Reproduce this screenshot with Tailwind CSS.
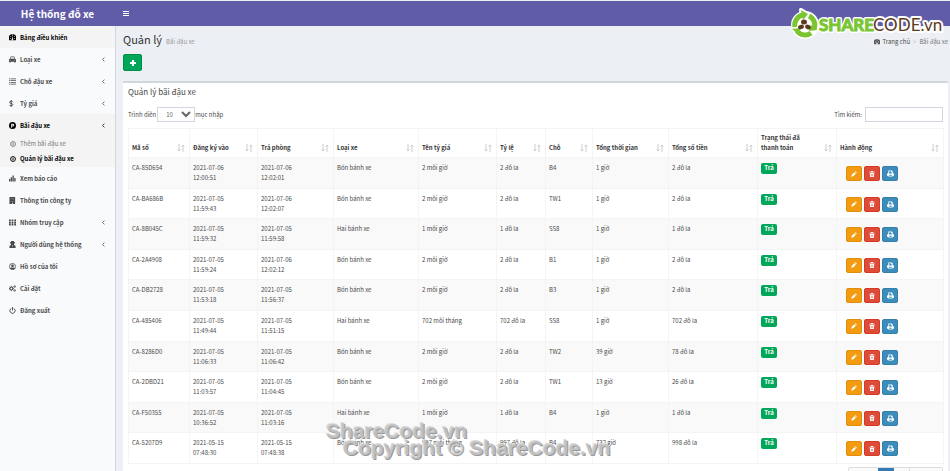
<!DOCTYPE html>
<html lang="vi">
  <head>
    <meta charset="UTF-8" />
    <meta name="viewport" content="width=device-width, initial-scale=1.0" />
    <script src="https://cdn.jsdelivr.net/npm/@tailwindcss/browser@4"></script>
    <title>Quản lý bãi đậu xe</title>
  </head>
  <body
    class="h-screen overflow-hidden flex flex-col bg-[#ecf0f5] pt-px font-['Noto_Sans_CJK_SC','Noto_Sans',sans-serif] text-[6px] leading-[10px] text-[#4a4a4a]"
  >
    <!-- ICONS -->
    <svg class="hidden">
      <symbol id="i-dashboard" viewBox="0 0 16 16"><path fill-rule="evenodd" d="M8 1a8 8 0 0 0-7.500 13h15A8 8 0 0 0 8 1zM7 3h2v2H7zM3 5h2v2H3zm8 0h2v2h-2zM2 9h2v2H2zm10 0h2v2h-2zM7.500 7h1.500l-.5 3a2 2 0 1 1-1.500 0z"/></symbol>
      <symbol id="i-car" viewBox="0 0 16 16"><path fill-rule="evenodd" d="M4 1h8l1.500 5H14l2 2v5h-1v2h-3v-2H4v2H1v-2H0V8l2-2h.5zm1 2-1 3h8l-1-3zM3 8.500a1 1 0 1 0 0 2 1 1 0 0 0 0-2zm10 0a1 1 0 1 0 0 2 1 1 0 0 0 0-2z"/></symbol>
      <symbol id="i-list" viewBox="0 0 16 16"><path d="M0 1h3v2H0zm4 0h12v2H4zM0 5h3v2H0zm4 0h12v2H4zM0 9h3v2H0zm4 0h12v2H4zM0 13h3v2H0zm4 0h12v2H4z"/></symbol>
      <symbol id="i-dollar" viewBox="0 0 16 16"><path d="M9 5C8 2 1 2 1 5.500S9 7 9 10.500 1 14 .5 11M5 0v16" fill="none" stroke="currentColor" stroke-width="2"/></symbol>
      <symbol id="i-park" viewBox="0 0 16 16"><path fill-rule="evenodd" d="M8 0a8 8 0 1 0 0 16A8 8 0 0 0 8 0zM5 4h4a3 3 0 0 1 0 6H7v3H5zm2 2v2h2a1 1 0 0 0 0-2z"/></symbol>
      <symbol id="i-circle" viewBox="0 0 16 16"><circle cx="8" cy="8" r="6.500" fill="none" stroke="currentColor" stroke-width="2.500"/><path d="M8 4v8M5 8h6" stroke="currentColor" stroke-width="1.500"/></symbol>
      <symbol id="i-chart" viewBox="0 0 16 16"><path d="M0 9h3v6H0zm4-4h3v10H4zm4-4h3v14H8zm4 6h3v8h-3z"/></symbol>
      <symbol id="i-building" viewBox="0 0 16 16"><path fill-rule="evenodd" d="M1 0h13v16H9v-3H7v3H1zm3 3v1h1V3zm3 0v1h1V3zm3 0v1h1V3zM4 6v1h1V6zm3 0v1h1V6zm3 0v1h1V6zM4 9v1h1V9zm3 0v1h1V9zm3 0v1h1V9z"/></symbol>
      <symbol id="i-grid" viewBox="0 0 16 16"><path d="M0 1h4v4H0zm6 0h4v4H6zm6 0h4v4h-4zM0 6h4v4H0zm6 0h4v4H6zm6 0h4v4h-4zM0 11h4v4H0zm6 0h4v4H6zm6 0h4v4h-4z"/></symbol>
      <symbol id="i-agent" viewBox="0 0 16 16"><path fill-rule="evenodd" d="M5 0h6l1 3h2v2h-2a4 4 0 0 1-1 4l4 2v5H1v-5l4-2a4 4 0 0 1-1-4H2V3h2zm2 10 1 4 1-4z"/></symbol>
      <symbol id="i-user" viewBox="0 0 16 16"><circle cx="8" cy="8" r="7" fill="none" stroke="currentColor" stroke-width="1.800"/><circle cx="8" cy="6.500" r="3"/><path d="M2 12c2-2 4-2 6-1 2-1 4-1 6 1-3 4-9 4-12 0z"/></symbol>
      <symbol id="i-gears" viewBox="0 0 16 16"><circle cx="5.500" cy="8" r="3.500" fill="none" stroke="currentColor" stroke-width="2.500"/><path d="M5.500 2v2m0 8v2M0 8h2m7 0h2M1.500 4 3 5.500m5 5L9.500 12M1.500 12 3 10.500m5-5L9.500 4" stroke="currentColor" stroke-width="2"/><circle cx="13" cy="3.500" r="1.800" fill="none" stroke="currentColor" stroke-width="2"/><circle cx="13" cy="12.500" r="1.800" fill="none" stroke="currentColor" stroke-width="2"/></symbol>
      <symbol id="i-power" viewBox="0 0 16 16"><path d="M4.500 3.500a6 6 0 1 0 7 0M8 0v8" fill="none" stroke="currentColor" stroke-width="2.200"/></symbol>
      <symbol id="i-left" viewBox="0 0 16 16"><path d="m11 2-6 6 6 6" fill="none" stroke="currentColor" stroke-width="2.500"/></symbol>
      <symbol id="i-sort" viewBox="0 0 16 16"><path d="M4 0v14M1 11l3 3 3-3M12 16V2M9 5l3-3 3 3" fill="none" stroke="currentColor" stroke-width="2"/></symbol>
      <symbol id="i-pencil" viewBox="0 0 16 16"><path d="m1 15 1-5 7-7 4 4-7 7zm9-13 1-1c1-1 5 3 4 4l-1 1z"/></symbol>
      <symbol id="i-trash" viewBox="0 0 16 16"><path fill-rule="evenodd" d="M6 0h4l1 2h4v2H1V2h4zM2 5h12l-1 11H3zm3 2v7h1V7zm2.500 0v7h1V7zM10 7v7h1V7z"/></symbol>
      <symbol id="i-print" viewBox="0 0 16 16"><path fill-rule="evenodd" d="M3 1h8l2 2v4h1l2 2v4h-3v2H3v-2H0V9l2-2h1zm2 2v5h6V5H9V3zm0 8v2h6v-2z"/></symbol>
    </svg>

    <header class="flex h-[25px] shrink-0 bg-[#605ca8] text-white">
      <a href="#" class="flex w-[115px] items-center justify-center text-[10px] font-bold">Hệ thống đỗ xe</a>
      <button aria-label="Menu" class="ml-2 flex w-[6px] flex-col justify-center gap-px">
        <span class="h-px w-full bg-white"></span>
        <span class="h-px w-full bg-white"></span>
        <span class="h-px w-full bg-white"></span>
      </button>
    </header>

    <div class="flex min-h-0 flex-1">
      <!-- SIDEBAR -->
      <aside class="w-[116px] shrink-0 border-r border-[#d2d6de] bg-[#f9fafc] font-bold">
        <nav id="menu"></nav>
      </aside>

      <main class="min-w-0 flex-1 pl-[7px] pr-[2px]">
        <div class="flex h-[28px] items-center justify-between">
          <h1 class="flex items-baseline gap-1 text-[11px] text-[#333]">
            Quản lý <small class="text-[6px] text-[#999]">Bãi đậu xe</small>
          </h1>
          <div class="flex items-center gap-[3px] pt-1">
            <a href="#" class="flex items-center gap-[2px]">
              <svg class="size-[6px] fill-current"><use href="#i-dashboard" /></svg>Trang chủ
            </a>
            <span class="text-[#bbb]">&gt;</span>
            <span class="text-[#777]">Bãi đậu xe</span>
          </div>
        </div>

        <button aria-label="Thêm" class="flex h-[17px] w-[19px] items-center justify-center rounded-[2px] border border-[#008d4c] bg-[#00a65a]">
          <svg class="size-[6px]" viewBox="0 0 6 6"><path d="M3 0v6M0 3h6" stroke="#fff" stroke-width="2" /></svg>
        </button>

        <section class="mt-[10px] border-t-2 border-[#d2d6de] bg-white px-[5px] pb-4">
          <h2 class="flex h-[18px] items-center text-[8px]">Quản lý bãi đậu xe</h2>

          <div class="mt-[6px] flex h-[15px] items-center justify-between">
            <label class="flex items-center">
              Trình diễn
              <select class="ml-px h-[15px] w-[38px] border border-[#d2d6de] bg-white pl-1 text-[6px] text-[#666]">
                <option>10</option>
                <option>25</option>
              </select>
              mục nhập
            </label>
            <label class="flex items-center gap-[3px]">
              Tìm kiếm:
              <input type="search" class="h-[15px] w-[78px] border border-[#d2d6de] bg-white px-1" />
            </label>
          </div>

          <table class="mt-[6px] h-[336px] w-full table-fixed border-collapse border border-[#f4f4f4]">
            <colgroup>
              <col class="w-[61px]" />
              <col class="w-[68px]" />
              <col class="w-[76px]" />
              <col class="w-[85px]" />
              <col class="w-[78px]" />
              <col class="w-[49px]" />
              <col class="w-[47px]" />
              <col class="w-[76px]" />
              <col class="w-[89px]" />
              <col class="w-[79px]" />
              <col class="w-[107px]" />
            </colgroup>
            <thead>
              <tr id="head" class="h-[29px] text-left align-bottom text-[#333]"></tr>
            </thead>
            <tbody id="rows"></tbody>
          </table>

          <div class="mt-[3px] flex justify-end">
            <div class="flex rounded-[2px] border border-[#ddd] bg-[#fafafa] leading-[20px]">
              <a href="#" class="w-[29px] text-center text-[#777]">Trước</a>
              <a href="#" class="w-[16px] bg-[#337ab7] text-center text-white">1</a>
              <a href="#" class="w-[16px] border-r border-[#ddd] text-center">2</a>
              <a href="#" class="w-[32px] text-center">Kế tiếp</a>
            </div>
          </div>
        </section>
      </main>
    </div>

    <!-- LOGO -->
    <svg class="absolute right-[6px] top-[8px] h-[32px] w-[154px]" viewBox="0 0 154 32">
      <g fill="#fff" stroke="#fff" stroke-width="4" stroke-linejoin="round" font-family="Lato">
        <circle cx="15" cy="17" r="12" />
        <path d="m11 2 8 5-6 5z" />
        <text x="29" y="23" font-size="17" font-weight="700">SHARE</text>
        <text x="83" y="23" font-size="17">CODE.vn</text>
      </g>
      <g fill="none" stroke="#7ac530" stroke-width="5">
        <path d="M5 19A10 10 0 0 1 13 7" />
        <path d="M19 8A10 10 0 0 1 24 21" />
        <path d="M21 25A10 10 0 0 1 7 23" />
      </g>
      <path d="m11 2 7 4-5 6zM27 22l-8 1 2-6zM2 21l8-1-1 7z" fill="#7ac530" />
      <g fill="#5d3a1e">
        <ellipse cx="14" cy="14" rx="3" ry="2.500" />
        <ellipse cx="11" cy="19" rx="3" ry="2.200" transform="rotate(-20 11 19)" />
        <ellipse cx="18" cy="19" rx="3" ry="2.200" transform="rotate(30 18 19)" />
      </g>
      <g font-family="Lato">
        <text x="29" y="23" font-size="17" font-weight="700" fill="#7ac530" stroke="#7ac530" stroke-width="1">SHARE</text>
        <text x="83" y="23" font-size="17" fill="#5d3a1e">CODE.vn</text>
      </g>
    </svg>

    <!-- WATERMARK -->
    <div class="pointer-events-none absolute left-[326px] top-[422px] font-['Liberation_Sans',sans-serif] text-[21px] leading-[17px] font-bold text-[#c4c4c4]/90 [text-shadow:1px_1px_0_#999,-1px_-1px_0_#ddd]">
      <p>ShareCode.vn</p>
      <p class="pl-[17px]">Copyright © ShareCode.vn</p>
    </div>

    <script>
      const icon = (name, cls) => `<svg class="${cls}"><use href="#i-${name}" /></svg>`;

      const menu = [
        ["dashboard", "Bảng điều khiển", false, true],
        ["car", "Loại xe", true],
        ["list", "Chỗ đậu xe", true],
        ["dollar", "Tỷ giá", true],
        ["park", "Bãi đậu xe", true, true, ["Thêm bãi đậu xe", "Quản lý bãi đậu xe"]],
        ["chart", "Xem báo cáo"],
        ["building", "Thông tin công ty"],
        ["grid", "Nhóm truy cập", true],
        ["agent", "Người dùng hệ thống", true],
        ["user", "Hồ sơ của tôi"],
        ["gears", "Cài đặt"],
        ["power", "Đăng xuất"],
      ];

      document.querySelector("#menu").innerHTML = menu
        .map(([name, text, arrow, active, children]) => {
          const color = active ? "bg-[#f4f4f5] text-black" : "";
          let html = `<a href="#" class="flex h-[22px] items-center pt-px pl-[9px] pr-[9px] ${color}">
            ${icon(name, "mr-[4px] size-[7px] fill-current")}<span class="flex-1">${text}</span>
            ${arrow ? icon("left", "size-[5px]") : ""}</a>`;
          if (children) {
            html += `<div class="bg-[#f4f4f5] pb-px">${children
              .map((child, i) => `<a href="#" class="flex h-[15px] items-center pt-px pl-[10px] ${i ? "text-black" : "font-normal text-[#777]"}">
                ${icon("circle", "mr-[4px] size-[6px]")}${child}</a>`)
              .join("")}</div>`;
          }
          return html;
        })
        .join("");

      const heads = ["Mã số", "Đăng ký vào", "Trả phòng", "Loại xe", "Tên tỷ giá", "Tỷ lệ", "Chỗ", "Tổng thời gian", "Tổng số tiền", "Trạng thái đã thanh&nbsp;toán", "Hành động"];

      document.querySelector("#head").innerHTML = heads
        .map((text) => `<th class="border border-[#f4f4f4] py-1 pl-[3px] pr-1 align-bottom">
          <div class="flex items-end justify-between"><span>${text}</span>${icon("sort", "mb-px size-[8px] shrink-0 text-[#ccc]")}</div></th>`)
        .join("");

      const rows = [
        ["CA-85D654", "2021-07-06 12:00:51", "2021-07-06 12:02:01", "Bốn bánh xe", "2 mỗi giờ", "2 đô la", "B4", "1 giờ", "2 đô la"],
        ["CA-BA686B", "2021-07-05 11:59:43", "2021-07-06 12:02:07", "Bốn bánh xe", "2 mỗi giờ", "2 đô la", "TW1", "1 giờ", "2 đô la"],
        ["CA-8B045C", "2021-07-05 11:59:32", "2021-07-05 11:59:58", "Hai bánh xe", "1 mỗi giờ", "1 đô la", "SS8", "1 giờ", "1 đô la"],
        ["CA-2A4908", "2021-07-05 11:59:24", "2021-07-06 12:02:12", "Bốn bánh xe", "2 mỗi giờ", "2 đô la", "B1", "1 giờ", "2 đô la"],
        ["CA-DB2728", "2021-07-05 11:53:18", "2021-07-05 11:56:37", "Bốn bánh xe", "2 mỗi giờ", "2 đô la", "B3", "1 giờ", "2 đô la"],
        ["CA-485406", "2021-07-05 11:49:44", "2021-07-05 11:51:15", "Hai bánh xe", "702 mỗi tháng", "702 đô la", "SS8", "1 giờ", "702 đô la"],
        ["CA-8286D0", "2021-07-05 11:06:33", "2021-07-05 11:06:42", "Bốn bánh xe", "2 mỗi giờ", "2 đô la", "TW2", "39 giờ", "78 đô la"],
        ["CA-2DBD21", "2021-07-05 11:03:57", "2021-07-05 11:04:45", "Bốn bánh xe", "2 mỗi giờ", "2 đô la", "TW1", "13 giờ", "26 đô la"],
        ["CA-F50355", "2021-07-05 10:36:52", "2021-07-05 11:03:16", "Hai bánh xe", "1 mỗi giờ", "1 đô la", "B4", "1 giờ", "1 đô la"],
        ["CA-5207D9", "2021-05-15 07:48:30", "2021-05-15 07:48:38", "Bốn bánh xe", "997 mỗi tháng", "997 đô la", "B4", "732 giờ", "998 đô la"],
      ];

      const cell = "border border-[#f4f4f4] pl-[3px] pr-1 pt-[5px] pb-1 align-top";
      const button = "flex h-[15px] w-[16px] items-center justify-center rounded-[2px] border";

      document.querySelector("#rows").innerHTML = rows
        .map((row) => `<tr class="odd:bg-[#f9f9f9]">
          ${row.map((text) => `<td class="${cell}">${text.replace(/^(\d+-\d+-\d+) /, "$1<br />")}</td>`).join("")}
          <td class="${cell}"><span class="block h-[11px] w-[16px] rounded-[2px] bg-[#00a65a] text-center font-bold text-white">Trả</span></td>
          <td class="${cell}"><div class="flex gap-[2px] pl-[6px] pt-[3px] text-white">
            <button aria-label="Sửa" class="${button} border-[#e08e0b] bg-[#f39c12]">${icon("pencil", "size-[6px] fill-current")}</button>
            <button aria-label="Xóa" class="${button} border-[#d73925] bg-[#dd4b39]">${icon("trash", "size-[6px] fill-current")}</button>
            <button aria-label="In" class="${button} border-[#367fa9] bg-[#3c8dbc]">${icon("print", "size-[7px] fill-current")}</button>
          </div></td></tr>`)
        .join("");
    </script>
  </body>
</html>
